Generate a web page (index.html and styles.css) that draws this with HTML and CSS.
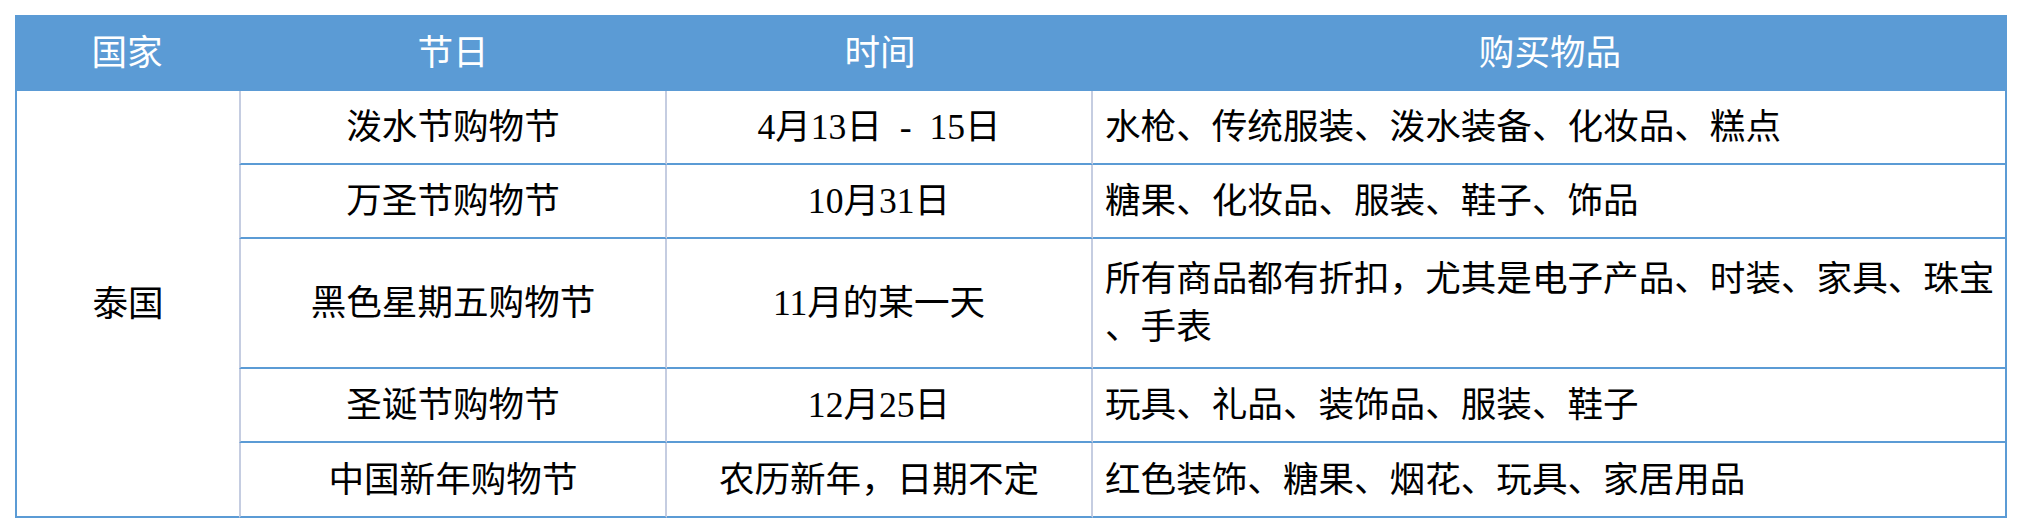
FILE: index.html
```html
<!DOCTYPE html>
<html lang="zh-CN">
<head>
<meta charset="utf-8">
<title>泰国购物节</title>
<link rel="stylesheet" href="styles.css">
</head>
<body>
<table class="fest">
  <colgroup>
    <col class="c1">
    <col class="c2">
    <col class="c3">
    <col class="c4">
  </colgroup>
  <thead>
    <tr class="head">
      <th>国家</th>
      <th>节日</th>
      <th>时间</th>
      <th>购买物品</th>
    </tr>
  </thead>
  <tbody>
    <tr class="r1">
      <td class="country" rowspan="5">泰国</td>
      <td class="name">泼水节购物节</td>
      <td class="time">4月13日&#8194;-&#8194;15日</td>
      <td class="items">水枪、传统服装、泼水装备、化妆品、糕点</td>
    </tr>
    <tr class="r2">
      <td class="name">万圣节购物节</td>
      <td class="time">10月31日</td>
      <td class="items">糖果、化妆品、服装、鞋子、饰品</td>
    </tr>
    <tr class="r3">
      <td class="name">黑色星期五购物节</td>
      <td class="time">11月的某一天</td>
      <td class="items">所有商品都有折扣，尤其是电子产品、时装、家具、珠宝、手表</td>
    </tr>
    <tr class="r4">
      <td class="name">圣诞节购物节</td>
      <td class="time">12月25日</td>
      <td class="items">玩具、礼品、装饰品、服装、鞋子</td>
    </tr>
    <tr class="r5">
      <td class="name">中国新年购物节</td>
      <td class="time">农历新年，日期不定</td>
      <td class="items">红色装饰、糖果、烟花、玩具、家居用品</td>
    </tr>
  </tbody>
</table>
</body>
</html>
```

FILE: styles.css
```css
html, body {
  margin: 0;
  padding: 0;
  background: #ffffff;
}

.fest {
  margin: 15px 0 0 15px;
  width: 1992px;
  table-layout: fixed;
  border-collapse: separate;
  border-spacing: 0;
  font-family: "Liberation Serif", "Noto Sans CJK SC", sans-serif;
  font-size: 35.6px;
  line-height: 48px;
  color: #000000;
}

.c1 { width: 224px; }
.c2 { width: 428px; }
.c3 { width: 426px; }
.c4 { width: 914px; }

.fest th,
.fest td {
  padding: 0;
  font-weight: normal;
  vertical-align: middle;
}

.head { height: 76px; }
.head th {
  background: #5b9bd5;
  color: #ffffff;
  text-align: center;
}

.r1, .r2, .r4 { height: 74px; }
.r3 { height: 130px; }
.r5 { height: 75px; }

.fest tbody td {
  border-bottom: 2px solid #5b9bd5;
}

.country {
  text-align: center;
  border-left: 2px solid #5b9bd5;
}

.name {
  text-align: center;
  border-left: 2px solid #c5cde1;
  border-right: 2px solid #c5cde1;
}

.time {
  text-align: center;
  border-right: 2px solid #c5cde1;
}

.items {
  text-align: left;
  padding-left: 12px !important;
  border-right: 2px solid #5b9bd5;
  line-break: anywhere;
}
```
